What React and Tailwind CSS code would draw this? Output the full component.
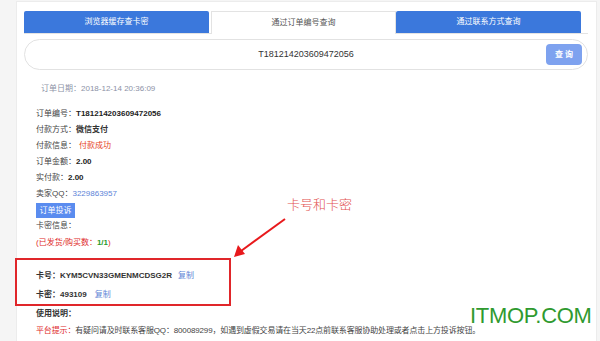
import React from "react";

const font = { fontFamily: '"Liberation Sans","Noto Sans CJK SC",sans-serif' };

function Row({ label, children, className = "" }) {
  return (
    <div className={"h-[16px] leading-[16px] text-[8px] text-[#444] whitespace-nowrap " + className}>
      {label}
      {children}
    </div>
  );
}

export default function App() {
  return (
    <div
      className="relative w-[600px] h-[341px] overflow-hidden bg-[#f5f5f5]"
      style={font}
    >
      <div className="ml-[16px] mt-[1px] w-[581px] h-[345px] bg-white border border-[#ececec] pt-[9px] pl-[7px] pr-[8px]">
        {/* tabs */}
        <div className="flex h-[23px] border-b border-[#e3e3e3] text-[8px]">
          <div className="w-[185px] h-[22px] bg-[#3b78dc] text-white flex items-center justify-center rounded-t-[2px]">
            浏览器缓存查卡密
          </div>
          <div className="ml-[2px] w-[185px] h-[23px] bg-white border border-b-0 border-[#e3e3e3] text-[#555] flex items-center justify-center">
            通过订单编号查询
          </div>
          <div className="w-[185px] h-[22px] bg-[#3b78dc] text-white flex items-center justify-center rounded-t-[2px]">
            通过联系方式查询
          </div>
        </div>
        {/* search */}
        <div className="relative mt-[5px] h-[31px] rounded-full border border-[#e2e2e2] flex items-center justify-center">
          <span className="text-[9px] text-[#333]">T181214203609472056</span>
          <div className="absolute right-[5px] top-[4px] w-[36px] h-[21px] rounded-[4px] bg-[#7ea2ef] text-white text-[8px] font-bold flex items-center justify-center">
            查 询
          </div>
        </div>

        <div className="pl-[12px]">
          <div className="mt-[11px] pl-[5px] h-[16px] leading-[16px] text-[8px] text-[#8c92a6]">
            订单日期：2018-12-14 20:36:09
          </div>
          <div className="mt-[9px]">
            <Row label="订单编号：">
              <span className="font-bold text-[#222]">T181214203609472056</span>
            </Row>
            <Row label="付款方式：">
              <span className="font-bold text-[#333]">微信支付</span>
            </Row>
            <Row label="付款信息：">
              <span className="ml-[3px] text-[#e63e1c]">付款成功</span>
            </Row>
            <Row label="订单金额：">
              <span className="font-bold text-[#222]">2.00</span>
            </Row>
            <Row label="实付款：">
              <span className="font-bold text-[#222]">2.00</span>
            </Row>
            <Row label="卖家QQ：">
              <span className="text-[#5b84d8]">3229863957</span>
            </Row>
          </div>
          <div className="mt-[1px] w-[39px] h-[15px] bg-[#5a8cef] text-white text-[8px] flex items-center justify-center">
            订单投诉
          </div>
          <Row label="卡密信息：" />
          <div className="mt-[1px] h-[16px] leading-[16px] text-[8px] text-[#e02a2a]">
            (已发货/购买数：<span className="text-[#2a9a2a] font-bold">1/1</span>)
          </div>
          <div className="mt-[17px] h-[16px] leading-[16px] text-[8px] text-[#333] whitespace-nowrap font-bold">
            卡号：KYM5CVN33GMENMCDSG2R
            <span className="ml-[6px] font-normal text-[#5f86d6]">复制</span>
          </div>
          <div className="mt-[3px] h-[16px] leading-[16px] text-[8px] text-[#333] whitespace-nowrap font-bold">
            卡密：493109
            <span className="ml-[8px] font-normal text-[#5f86d6]">复制</span>
          </div>
          <div className="mt-[3px] h-[16px] leading-[16px] text-[8px] text-[#333] font-bold">
            使用说明：
          </div>
          <div className="mt-[1px] h-[16px] leading-[16px] text-[8px] text-[#444] whitespace-nowrap tracking-[-0.15px]">
            <span className="text-[#e02a2a]">平台提示：</span>
            有疑问请及时联系客服QQ：800089299，如遇到虚假交易请在当天22点前联系客服协助处理或者点击上方投诉按钮。
          </div>
        </div>
      </div>

      {/* annotations */}
      <div className="absolute left-[15px] top-[258px] w-[216px] h-[48px] border-2 border-[#e0262a] pointer-events-none" />
      <div
        className="absolute left-[287px] top-[197px] text-[13px] leading-[16px] font-light text-[#e25050] whitespace-nowrap"
        style={{ fontFamily: '"Liberation Serif","Noto Sans CJK SC",serif' }}
      >
        卡号和卡密
      </div>
      <svg className="absolute left-0 top-0 pointer-events-none" width="600" height="341">
        <line x1="285" y1="219" x2="241" y2="251" stroke="#e8191c" strokeWidth="2" />
        <polygon points="234,257 238,245 245,254" fill="#e8191c" />
      </svg>
      <div className="absolute left-[470px] top-[305px] text-[22px] leading-none text-[#2f9a2f] tracking-[-0.3px] whitespace-nowrap">
        ITMOP.COM
      </div>
    </div>
  );
}
